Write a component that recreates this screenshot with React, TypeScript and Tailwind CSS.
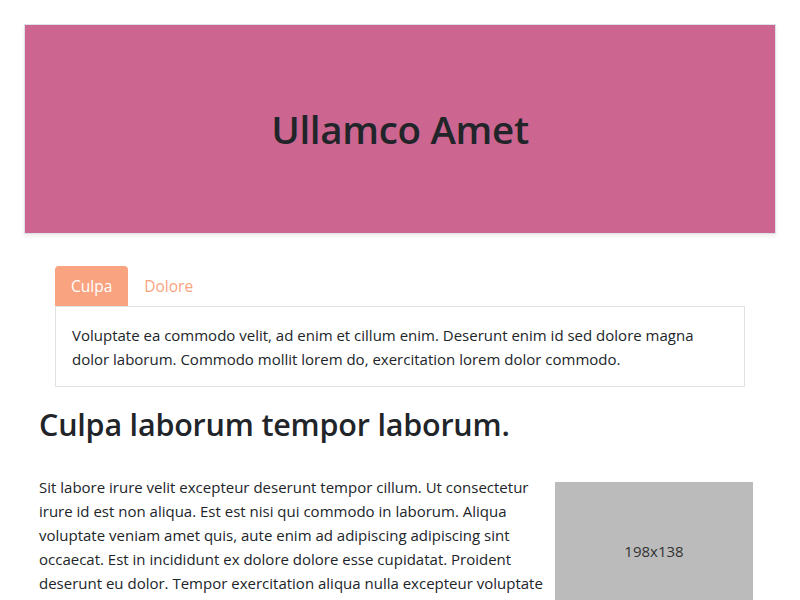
export default function App() {
  return (
    <div className="min-h-screen bg-white text-[#212529] font-['Open_Sans',sans-serif] text-[15px] leading-6">
      <div className="px-6 pt-6">
        <div className="h-[210px] flex items-center justify-center bg-[#cc6690] border border-[#dee2e6] shadow-[0_2px_4px_rgba(0,0,0,0.08)]">
          <h1 className="text-[38.5px] font-semibold leading-tight tracking-[-0.3px]">Ullamco Amet</h1>
        </div>
        <div className="px-[15px]">
          <div className="mx-4 mt-8">
            <div className="flex items-end h-10">
              <button className="h-10 px-4 rounded-t bg-[#f9a380] text-white text-[15.5px]">Culpa</button>
              <button className="h-10 px-4 text-[#f9a380] text-[15.5px]">Dolore</button>
            </div>
            <div className="border border-[#dee2e6] px-4 pt-4 pb-[15px]">
              Voluptate ea commodo velit, ad enim et cillum enim. Deserunt enim id sed dolore magna dolor laborum. Commodo mollit lorem do, exercitation lorem dolor commodo.
            </div>
          </div>
          <h2 className="mt-[19px] text-[30.5px] font-semibold leading-[37px] tracking-[-0.2px]">Culpa laborum tempor laborum.</h2>
          <div className="mt-8 flex items-start">
            <p className="w-[508px]">
              Sit labore irure velit excepteur deserunt tempor cillum. Ut consectetur irure id est non aliqua. Est est nisi qui commodo in laborum. Aliqua voluptate veniam amet quis, aute enim ad adipiscing adipiscing sint occaecat. Est in incididunt ex dolore dolore esse cupidatat. Proident deserunt eu dolor. Tempor exercitation aliqua nulla excepteur voluptate
            </p>
            <div className="ml-auto mr-2 mt-[7px] w-[198px] h-[138px] shrink-0 bg-[#bbbbbb] flex items-center justify-center text-[#333] text-[15px]">
              198x138
            </div>
          </div>
        </div>
      </div>
    </div>
  );
}
